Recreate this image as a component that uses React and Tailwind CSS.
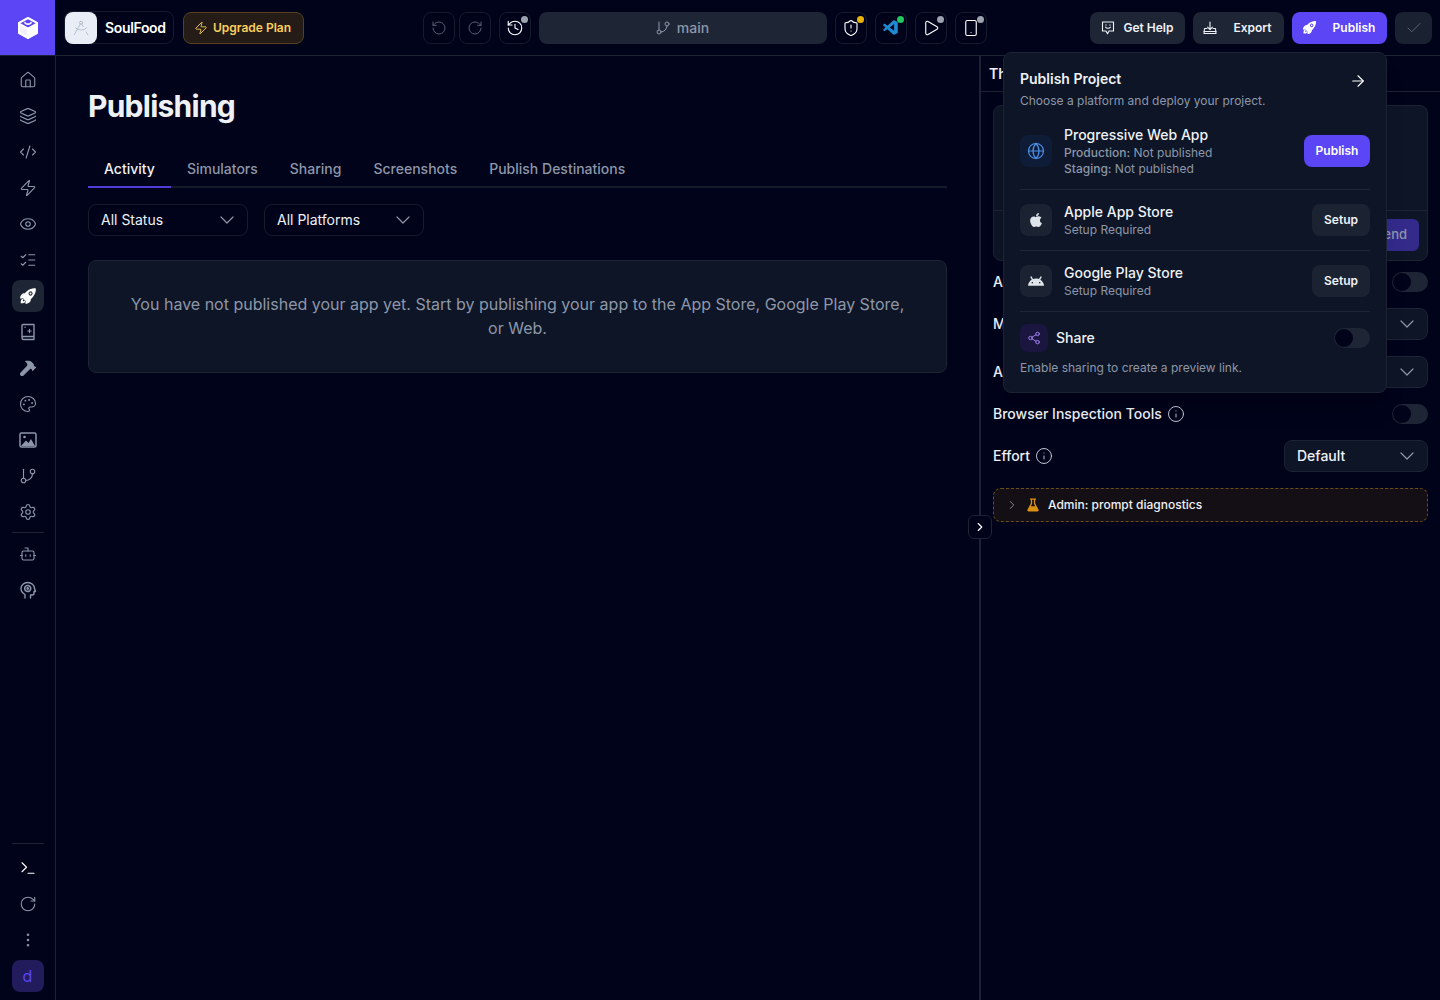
import React from "react";
import {
  House, Layers, CodeXml, Zap, Eye, ListChecks, Hammer, Palette, GitBranch, Settings, Bot,
  Terminal, RotateCw, RotateCcw, EllipsisVertical, History, ShieldAlert, Play, Smartphone, DraftingCompass,
  Check, ChevronDown, ChevronRight, ArrowRight, Globe, Share2, Info,
} from "lucide-react";
import { IoRocket } from "react-icons/io5";
import { FaApple } from "react-icons/fa";
import { SiAndroid } from "react-icons/si";
import { VscVscode } from "react-icons/vsc";

const LogoCube = () => (
  <svg width="22" height="24" viewBox="0 0 22 24" fill="none" stroke="white" strokeWidth="2" strokeLinejoin="round">
    <path d="M11 2 L20 6.8 V17 L11 22 L2 17 V6.8 Z" />
    <path d="M2 7.5 L11 12.5 V22 L2 17 Z" fill="white" fillOpacity="0.92" />
    <path d="M11 12.5 L20 7.5 V17 L11 22 Z" fill="white" />
    <path d="M8 6.6 C8.5 8.6 13.5 8.6 14 6.6" strokeWidth="1.6" strokeLinecap="round" />
  </svg>
);

const ImageFilled = () => (
  <svg width="18" height="18" viewBox="0 0 18 18" fill="none">
    <rect x="1" y="2" width="16" height="14" rx="1.5" stroke="currentColor" strokeWidth="1.5" />
    <circle cx="5.5" cy="6" r="1.3" fill="currentColor" />
    <path d="M2 15 L7 9.5 L9.5 12 L12 8 L16 15 Z" fill="currentColor" />
  </svg>
);

const BookSpark = () => (
  <svg width="18" height="18" viewBox="0 0 18 18" fill="none" stroke="currentColor" strokeWidth="1.4" strokeLinejoin="round" strokeLinecap="round">
    <path d="M3 14 V2.5 C3 1.9 3.4 1.5 4 1.5 H15 V16.5 H4.5 C3.6 16.5 3 15.8 3 15 C3 14.2 3.6 13.5 4.5 13.5 H15" />
    <path d="M10.5 6.3 V9.7 M8.8 8 H12.2" strokeWidth="1.2" />
    <path d="M6 4.2 V4.3" strokeWidth="1.4" />
  </svg>
);

const HeadCog = () => (
  <svg width="18" height="18" viewBox="0 0 18 18" fill="none" stroke="currentColor" strokeWidth="1.4" strokeLinecap="round" strokeLinejoin="round">
    <path d="M6 17 V13.5 C3.5 12 2 10 2 7.5 C2 4 5 1.5 8.5 1.5 C12.5 1.5 15.5 4 15.5 7.5 L16.5 10.5 H15 V12.5 C15 13.5 14.2 14 13 14 H11.5 V17" />
    <circle cx="8.7" cy="7.5" r="3" strokeDasharray="2.2 0.6" strokeWidth="1.6" />
    <circle cx="8.7" cy="7.5" r="0.7" fill="currentColor" />
  </svg>
);

const HelpIcon = () => (
  <svg width="14" height="14" viewBox="0 0 14 14" fill="none" stroke="currentColor" strokeWidth="1.1" strokeLinecap="round" strokeLinejoin="round">
    <path d="M1.5 1 H12.5 V10 H8 L6.5 12.8 L5 10 H1.5 Z" />
    <path d="M4.6 6.2 C5.5 7.6 8.5 7.6 9.4 6.2" />
    <path d="M5 3.8 V4.2 M9 3.8 V4.2" />
  </svg>
);

const ExportIcon = () => (
  <svg width="14" height="14" viewBox="0 0 14 14" fill="none" stroke="currentColor" strokeWidth="1.1" strokeLinecap="round" strokeLinejoin="round">
    <path d="M7 1 V8.5 M4.6 6.2 L7 8.6 L9.4 6.2" />
    <path d="M4 7.5 H1.5 L1 12.5 H13 L12.5 7.5 H10" />
    <path d="M1 10.5 H13" />
  </svg>
);

const Flask = () => (
  <svg width="12" height="14" viewBox="0 0 14 16" fill="#d98f0f">
    <path d="M3.5 0.5 H10.5 V2 H9.5 V6 L13.5 13.5 C14 14.6 13.4 15.5 12.2 15.5 H1.8 C0.6 15.5 0 14.6 0.5 13.5 L4.5 6 V2 H3.5 Z M6 2 V6.4 L4.4 9.5 H9.6 L8 6.4 V2 Z" fillRule="evenodd" />
  </svg>
);

const SideIcon = ({ icon: I, active, white, filled }) => (
  <div className={`flex h-8 w-8 items-center justify-center rounded-lg ${active ? "bg-[#1e2636] text-white" : white ? "text-white" : "text-[#8d97a9]"}`}>
    <I size={18} strokeWidth={1.5} {...(filled ? { fill: "currentColor" } : {})} />
  </div>
);

const IconBtn = ({ children, dot, dim }) => (
  <div className={`relative flex h-8 w-8 shrink-0 items-center justify-center rounded-lg border border-[#141b2b] ${dim ? "text-[#5c6577]" : "text-white"}`}>
    {children}
    {dot && <span className={`absolute right-[2px] top-[3px] h-[7px] w-[7px] rounded-full ${dot}`} />}
  </div>
);

const TopAction = ({ className, gap, children, label }) => (
  <div className={`flex h-8 items-center justify-center rounded-lg text-xs font-semibold text-[#eef1f6] ${className}`}>
    <span className={`flex items-center ${gap}`}>{children}<span>{label}</span></span>
  </div>
);

const Select = ({ label, className }) => (
  <div className={`flex h-8 items-center justify-between rounded-lg border text-sm ${className}`}>
    <span>{label}</span>
    <ChevronDown size={24} strokeWidth={1.2} className="text-[#8d97a9]" />
  </div>
);

const Toggle = ({ className }) => (
  <div className={`flex h-5 w-9 items-center rounded-full bg-[#1e2636] pl-[1px] ${className || ""}`}>
    <span className="h-[18px] w-[18px] rounded-full bg-[#01031a]" />
  </div>
);

const PlatformRow = ({ icon, title, sub, border = true }) => (
  <div className={`flex items-center py-3 ${border ? "border-b border-[#1e2636]" : ""}`}>
    <div className="flex h-8 w-8 items-center justify-center rounded-lg bg-[#1b2332] text-[#dfe3ea]">{icon}</div>
    <div className="ml-3 flex-1">
      <div className="text-sm font-medium leading-5 text-[#eef1f6]">{title}</div>
      <div className="text-xs leading-4 text-[#8d97a9]">{sub}</div>
    </div>
    <div className="flex h-8 w-[58px] items-center justify-center rounded-lg bg-[#1b2332] text-xs font-semibold text-[#eef1f6]">Setup</div>
  </div>
);

const tabs = ["Simulators", "Sharing", "Screenshots", "Publish Destinations"];

export default function App() {
  return (
    <div className="flex h-[1000px] flex-col overflow-hidden bg-[#01031a] font-['Inter',sans-serif] text-[#eef1f6]">
      <header className="flex h-[56px] shrink-0 items-center border-b border-[#1c2333]">
        <div className="flex h-[55px] w-[55px] shrink-0 items-center justify-center bg-[#5b45f5]">
          <LogoCube />
        </div>
        <div className="ml-[9px] flex h-[33px] w-[110px] items-center rounded-lg border border-[#141b2b]">
          <div className="flex h-8 w-8 items-center justify-center rounded-lg bg-[#e8edf6] text-[#a9b1c0]">
            <DraftingCompass size={18} strokeWidth={1} />
          </div>
          <span className="ml-2 text-sm font-semibold tracking-[-0.35px] text-white">SoulFood</span>
        </div>
        <div className="ml-[9px] flex h-8 w-[121px] items-center justify-center gap-[5px] rounded-lg border border-[#54411f] bg-[#251c17] pr-[2px] text-xs font-semibold text-[#f9cf5c]">
          <Zap size={14} strokeWidth={1.5} />
          <span>Upgrade Plan</span>
        </div>
        <div className="ml-[119px] flex items-center">
          <IconBtn dim><RotateCcw size={16} strokeWidth={1.4} /></IconBtn>
          <div className="ml-1"><IconBtn dim><RotateCw size={16} strokeWidth={1.4} /></IconBtn></div>
          <div className="ml-2"><IconBtn dot="bg-[#9ca3af]"><History size={18} strokeWidth={1.5} /></IconBtn></div>
          <div className="ml-2 flex h-8 w-[288px] items-center justify-center gap-[6px] rounded-lg bg-[#1e2636] pr-[2px] text-sm font-medium text-[#8d97a9]">
            <GitBranch size={16} strokeWidth={1.5} />
            <span>main</span>
          </div>
          <div className="ml-2"><IconBtn dot="bg-[#eab308]"><ShieldAlert size={18} strokeWidth={1.5} /></IconBtn></div>
          <div className="ml-2"><IconBtn dot="bg-[#22c55e]"><VscVscode size={18} className="text-[#1f8ad2]" /></IconBtn></div>
          <div className="ml-2"><IconBtn dot="bg-[#9ca3af]"><Play size={18} strokeWidth={1.5} /></IconBtn></div>
          <div className="ml-2"><IconBtn dot="bg-[#9ca3af]"><Smartphone size={18} strokeWidth={1.5} /></IconBtn></div>
        </div>
        <div className="ml-auto flex items-center pr-2">
          <TopAction className="w-[95px] bg-[#1e2636]" gap="gap-2" label="Get Help"><HelpIcon /></TopAction>
          <TopAction className="ml-2 w-[91px] bg-[#1e2636] pr-[2px]" gap="gap-4" label="Export"><ExportIcon /></TopAction>
          <TopAction className="ml-2 w-[95px] bg-[#5b45f5] pr-[2px] text-white" gap="gap-4" label="Publish"><IoRocket size={15} /></TopAction>
          <div className="ml-2 flex h-8 w-[37px] items-center justify-center rounded-lg bg-[#1a2130] text-[#5c6577]">
            <Check size={18} strokeWidth={1.3} />
          </div>
        </div>
      </header>

      <div className="flex min-h-0 flex-1">
        <aside className="flex w-[56px] shrink-0 flex-col items-center gap-1 border-r border-[#1c2333] pb-2 pt-2">
          <SideIcon icon={House} />
          <SideIcon icon={Layers} />
          <SideIcon icon={CodeXml} />
          <SideIcon icon={Zap} />
          <SideIcon icon={Eye} />
          <SideIcon icon={ListChecks} />
          <SideIcon icon={IoRocket} active />
          <SideIcon icon={BookSpark} />
          <SideIcon icon={Hammer} filled />
          <SideIcon icon={Palette} />
          <SideIcon icon={ImageFilled} />
          <SideIcon icon={GitBranch} />
          <SideIcon icon={Settings} />
          <div className="mb-[1px] h-px w-8 bg-[#1c2333]" />
          <SideIcon icon={Bot} />
          <SideIcon icon={HeadCog} />
          <div className="mt-auto mb-1 h-px w-8 bg-[#1c2333]" />
          <SideIcon icon={Terminal} white />
          <SideIcon icon={RotateCw} />
          <SideIcon icon={EllipsisVertical} />
          <div className="flex h-8 w-8 items-center justify-center rounded-lg bg-[#231c5c] text-base text-[#5b45f5]">d</div>
        </aside>

        <main className="w-[923px] shrink-0 px-8 pt-[30px]">
          <h1 className="text-[30px] font-bold leading-[40px] tracking-[-0.75px] text-[#eef1f6]">Publishing</h1>
          <nav className="mt-[26px] flex h-[36px] border-b-2 border-[#141b2b]">
            <div className="h-[36px] border-b-2 border-[#4f3bd6] px-4 pt-[7px] text-sm font-medium leading-5 text-[#eef1f6]">Activity</div>
            {tabs.map((t) => (
              <div key={t} className="px-4 pt-[7px] text-sm font-medium leading-5 text-[#8d97a9]">{t}</div>
            ))}
          </nav>
          <div className="mt-4 flex gap-4">
            <Select label="All Status" className="w-40 border-[#141b2b] pl-3 pr-2" />
            <Select label="All Platforms" className="w-40 border-[#141b2b] pl-3 pr-2" />
          </div>
          <div className="mt-6 rounded-lg border border-[#1c2333] bg-[#0d1526] px-10 pb-8 pt-[31px] text-center text-base leading-6 text-[#8d97a9]">
            You have not published your app yet. Start by publishing your app to the App Store, Google Play Store, or Web.
          </div>
        </main>

        <div className="relative w-[2px] shrink-0 bg-[#1c2333]">
          <div className="absolute left-[-11px] top-[459px] flex h-6 w-6 items-center justify-center rounded-md border border-[#1c2333] bg-[#01031a] text-white">
            <ChevronRight size={14} strokeWidth={2} />
          </div>
        </div>

        <section className="relative flex-1">
          <div className="flex h-9 items-center border-b border-[#1c2333] pl-2 text-sm font-semibold text-[#eef1f6]">Threads</div>
          <div className="mx-3 mt-[13px] h-[156px] rounded-lg border border-[#1c2333] bg-[#0d1526]">
            <div className="h-[105px] border-b border-[#1c2333]" />
            <div className="flex justify-end pr-2 pt-2">
              <div className="flex h-8 w-[60px] items-center justify-end rounded-md bg-[#332a8a] pr-3 text-[13px] font-medium text-[#8d97a9]">Send</div>
            </div>
          </div>
          <div className="mx-3 mt-[11px] flex flex-col gap-4 text-sm font-medium">
            <div className="flex h-5 items-center justify-between"><span>Auto-approve</span><Toggle /></div>
            <div className="flex items-center justify-between"><span>Model</span><Select label="Pro" className="w-36 border-[#1c2333] bg-[#0d1526] pl-3 pr-2 font-normal" /></div>
            <div className="flex items-center justify-between"><span>Agent</span><Select label="Build" className="w-36 border-[#1c2333] bg-[#0d1526] pl-3 pr-2 font-normal" /></div>
            <div className="flex h-5 items-center justify-between">
              <span className="flex items-center gap-[5px]">Browser Inspection Tools <Info size={18} strokeWidth={1.3} className="text-[#c3c9d4]" /></span>
              <Toggle />
            </div>
            <div className="flex items-center justify-between">
              <span className="flex items-center gap-[5px]">Effort <Info size={18} strokeWidth={1.3} className="text-[#c3c9d4]" /></span>
              <Select label="Default" className="w-36 border-[#1c2333] bg-[#0d1526] pl-3 pr-2 font-medium" />
            </div>
            <div className="flex h-[34px] items-center rounded-lg border border-dashed border-[#6b4f19] bg-[#140f14] pl-[11px] text-xs font-medium">
              <ChevronRight size={14} strokeWidth={1.5} className="text-[#8d97a9]" />
              <span className="ml-2"><Flask /></span>
              <span className="ml-[9px]">Admin: prompt diagnostics</span>
            </div>
          </div>

          <div className="absolute left-[22px] top-[-4px] w-[384px] rounded-lg border border-[#1c2333] bg-[#0d1526] px-4 pb-4 pt-4 shadow-xl">
            <div className="flex h-5 items-center justify-between">
              <span className="text-sm font-semibold leading-5 text-[#eef1f6]">Publish Project</span>
              <ArrowRight size={18} strokeWidth={1.5} className="mr-[3px] mt-1 text-white" />
            </div>
            <div className="mt-1 text-xs leading-4 text-[#8d97a9]">Choose a platform and deploy your project.</div>

            <div className="mt-4 flex items-center border-b border-[#1e2636] pb-3">
              <div className="flex h-8 w-8 items-center justify-center rounded-lg bg-[#0e1c38] text-[#4f8fe6]">
                <Globe size={18} strokeWidth={1.6} />
              </div>
              <div className="ml-3 flex-1">
                <div className="text-sm font-medium leading-5 text-[#eef1f6]">Progressive Web App</div>
                <div className="text-xs leading-4 text-[#8d97a9]"><span className="font-medium">Production:</span> Not published</div>
                <div className="text-xs leading-4 text-[#8d97a9]"><span className="font-medium">Staging:</span> Not published</div>
              </div>
              <div className="flex h-8 w-[66px] items-center justify-center rounded-lg bg-[#5b45f5] text-xs font-semibold text-white">Publish</div>
            </div>
            <PlatformRow icon={<FaApple size={16} />} title="Apple App Store" sub="Setup Required" />
            <PlatformRow icon={<SiAndroid size={16} />} title="Google Play Store" sub="Setup Required" />

            <div className="flex items-center pt-3">
              <div className="flex h-7 w-7 items-center justify-center rounded-lg bg-[#1a1640] text-[#a586f5]">
                <Share2 size={14} strokeWidth={1.6} />
              </div>
              <span className="ml-2 flex-1 text-sm font-medium text-[#eef1f6]">Share</span>
              <Toggle />
            </div>
            <div className="mt-2 text-xs leading-4 text-[#8d97a9]">Enable sharing to create a preview link.</div>
          </div>
        </section>
      </div>
    </div>
  );
}
